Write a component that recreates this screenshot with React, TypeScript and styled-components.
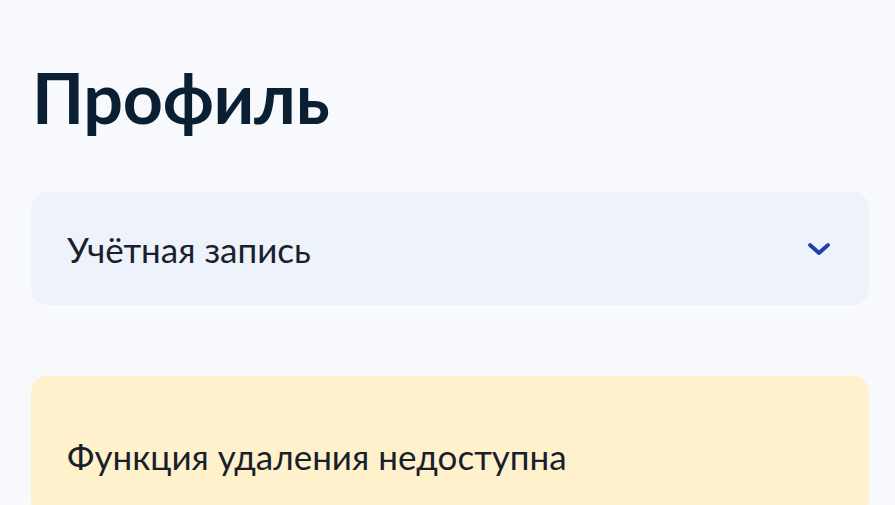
import styled, { createGlobalStyle } from "styled-components";

const GlobalStyle = createGlobalStyle`
  html, body {
    margin: 0;
    padding: 0;
    background: #f7f9fd;
  }
  body {
    font-family: Lato, "Noto Sans", sans-serif;
    color: #0b1f33;
    overflow: hidden;
  }
`;

export default function App() {
  return (
    <>
      <GlobalStyle />
      <Page>
        <Title>Профиль</Title>
        <AccountRow>
          <RowLabel>Учётная запись</RowLabel>
          <Chevron />
        </AccountRow>
        <Notice>
          <RowLabel>Функция удаления недоступна</RowLabel>
        </Notice>
      </Page>
    </>
  );
}

function Chevron() {
  return (
    <ChevronBox viewBox="0 0 24 16" aria-hidden>
      <path
        d="M4 4.5 L12 11.5 L20 4.5"
        fill="none"
        stroke="#1d3fb0"
        strokeWidth="3.4"
        strokeLinecap="round"
        strokeLinejoin="round"
      />
    </ChevronBox>
  );
}

const Page = styled.main`
  display: flex;
  flex-direction: column;
  padding: 55px 26px 0 31px;
  height: 505px;
  box-sizing: border-box;
  overflow: hidden;
`;

const Title = styled.h1`
  flex-shrink: 0;
  margin: 0 0 53px 1px;
  font-size: 70px;
  line-height: 84px;
  font-weight: 700;
  letter-spacing: -0.3px;
`;

const RowLabel = styled.span`
  font-size: 35px;
  line-height: 42px;
  color: #1a1f2b;
`;

const AccountRow = styled.div`
  flex-shrink: 0;
  display: flex;
  align-items: center;
  justify-content: space-between;
  height: 113px;
  box-sizing: border-box;
  padding: 0 36px;
  border-radius: 16px;
  background: #eef2fa;
`;

const ChevronBox = styled.svg`
  width: 28px;
  height: 18px;
`;

const Notice = styled.div`
  flex-shrink: 0;
  margin-top: 71px;
  padding: 59px 36px 40px;
  border-radius: 16px;
  background: #fff1cc;
`;
